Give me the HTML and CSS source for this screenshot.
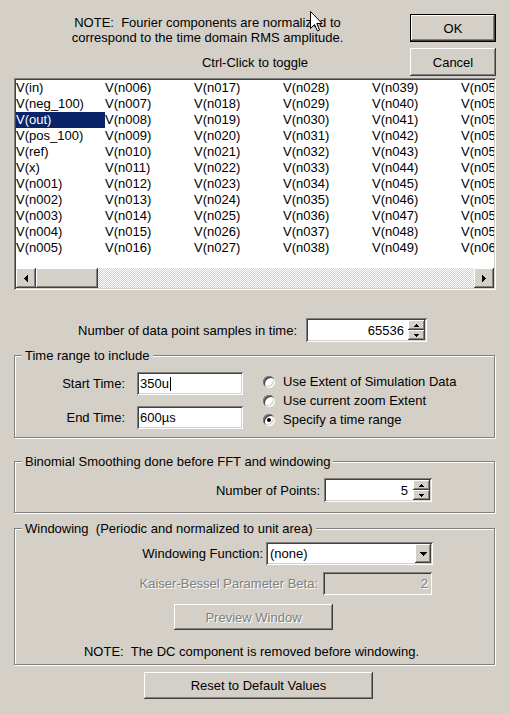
FILE: index.html
```html
<!DOCTYPE html>
<html>
<head>
<meta charset="utf-8">
<link rel="stylesheet" href="styles.css">
</head>
<body>
<div class="dialog">
  <div class="header">
    <div class="note">NOTE:&nbsp; Fourier components are normalized to<br>correspond to the time domain RMS amplitude.</div>
    <div class="btn raised default ok"><span>OK</span></div>
    <div class="hint">Ctrl-Click to toggle</div>
    <div class="btn raised cancel">Cancel</div>
  </div>

  <div class="listbox sunken">
    <div class="list-items">
      <div class="item">V(in)</div><div class="item">V(neg_100)</div><div class="item selected">V(out)</div><div class="item">V(pos_100)</div><div class="item">V(ref)</div><div class="item">V(x)</div><div class="item">V(n001)</div><div class="item">V(n002)</div><div class="item">V(n003)</div><div class="item">V(n004)</div><div class="item">V(n005)</div>
      <div class="item">V(n006)</div><div class="item">V(n007)</div><div class="item">V(n008)</div><div class="item">V(n009)</div><div class="item">V(n010)</div><div class="item">V(n011)</div><div class="item">V(n012)</div><div class="item">V(n013)</div><div class="item">V(n014)</div><div class="item">V(n015)</div><div class="item">V(n016)</div>
      <div class="item">V(n017)</div><div class="item">V(n018)</div><div class="item">V(n019)</div><div class="item">V(n020)</div><div class="item">V(n021)</div><div class="item">V(n022)</div><div class="item">V(n023)</div><div class="item">V(n024)</div><div class="item">V(n025)</div><div class="item">V(n026)</div><div class="item">V(n027)</div>
      <div class="item">V(n028)</div><div class="item">V(n029)</div><div class="item">V(n030)</div><div class="item">V(n031)</div><div class="item">V(n032)</div><div class="item">V(n033)</div><div class="item">V(n034)</div><div class="item">V(n035)</div><div class="item">V(n036)</div><div class="item">V(n037)</div><div class="item">V(n038)</div>
      <div class="item">V(n039)</div><div class="item">V(n040)</div><div class="item">V(n041)</div><div class="item">V(n042)</div><div class="item">V(n043)</div><div class="item">V(n044)</div><div class="item">V(n045)</div><div class="item">V(n046)</div><div class="item">V(n047)</div><div class="item">V(n048)</div><div class="item">V(n049)</div>
      <div class="item">V(n050)</div><div class="item">V(n051)</div><div class="item">V(n052)</div><div class="item">V(n053)</div><div class="item">V(n054)</div><div class="item">V(n055)</div><div class="item">V(n056)</div><div class="item">V(n057)</div><div class="item">V(n058)</div><div class="item">V(n059)</div><div class="item">V(n060)</div>
    </div>
    <div class="hscroll">
      <div class="sb-btn raised"><svg width="4" height="7" viewBox="0 0 4 7"><path d="M0 3h1V2h1V1h1V0h1v7H3V6H2V5H1V4H0z"/></svg></div>
      <div class="sb-thumb raised"></div>
      <div class="sb-track"></div>
      <div class="sb-btn raised"><svg width="4" height="7" viewBox="0 0 4 7"><path d="M0 0h1v1h1v1h1v1h1v1H3v1H2v1H1v1H0z"/></svg></div>
    </div>
  </div>

  <div class="samples-row">
    <span class="lbl">Number of data point samples in time:</span>
    <div class="field sunken samples-field">
      <span class="val">65536</span>
      <div class="spinner">
        <div class="spin-btn raised"><svg width="5" height="3" viewBox="0 0 5 3"><path d="M2 0h1v1h1v1h1v1H0V2h1V1h1z"/></svg></div>
        <div class="spin-btn raised"><svg width="5" height="3" viewBox="0 0 5 3"><path d="M0 0h5v1H4v1H3v1H2V2H1V1H0z"/></svg></div>
      </div>
    </div>
  </div>

  <fieldset class="group time-group">
    <legend>Time range to include</legend>
    <div class="time-body">
      <div class="time-grid">
        <span class="tlbl">Start Time:</span>
        <div class="field sunken tfield">350u<span class="caret"></span></div>
        <span class="tlbl">End Time:</span>
        <div class="field sunken tfield">600µs</div>
      </div>
      <div class="radios">
        <div class="radio-row"><span class="radio"></span><span>Use Extent of Simulation Data</span></div>
        <div class="radio-row"><span class="radio"></span><span>Use current zoom Extent</span></div>
        <div class="radio-row"><span class="radio checked"></span><span>Specify a time range</span></div>
      </div>
    </div>
  </fieldset>

  <fieldset class="group binom-group">
    <legend>Binomial Smoothing done before FFT and windowing</legend>
    <div class="binom-body">
      <span class="lbl">Number of Points:</span>
      <div class="field sunken points-field">
        <span class="val">5</span>
        <div class="spinner">
          <div class="spin-btn raised"><svg width="5" height="3" viewBox="0 0 5 3"><path d="M2 0h1v1h1v1h1v1H0V2h1V1h1z"/></svg></div>
          <div class="spin-btn raised"><svg width="5" height="3" viewBox="0 0 5 3"><path d="M0 0h5v1H4v1H3v1H2V2H1V1H0z"/></svg></div>
        </div>
      </div>
    </div>
  </fieldset>

  <fieldset class="group win-group">
    <legend>Windowing&nbsp; (Periodic and normalized to unit area)</legend>
    <div class="win-body">
      <div class="wrow">
        <span class="lbl">Windowing Function:</span>
        <div class="field sunken select">
          <span class="sel-text">(none)</span>
          <div class="dd-btn raised"><svg width="7" height="4" viewBox="0 0 7 4"><path d="M0 0h7v1H6v1H5v1H4v1H3V3H2V2H1V1H0z"/></svg></div>
        </div>
      </div>
      <div class="wrow kaiser-row">
        <span class="lbl disabled">Kaiser-Bessel Parameter Beta:</span>
        <div class="field sunken kaiser-field"><span class="disabled">2</span></div>
      </div>
      <div class="btn raised preview"><span class="disabled">Preview Window</span></div>
      <div class="dc-note">NOTE:&nbsp; The DC component is removed before windowing.</div>
    </div>
  </fieldset>

  <div class="btn raised reset">Reset to Default Values</div>

  <svg class="cursor" width="13" height="21" viewBox="0 0 13 21"><path d="M0.5 0.5V17.5L4.5 13.5L7.5 20L9.5 19L6.8 12.5H12.2Z" fill="#fff" stroke="#000" stroke-width="1"/></svg>
</div>
</body>
</html>
```

FILE: styles.css
```css
* { box-sizing: border-box; }
html, body { margin: 0; padding: 0; }
body {
  width: 510px;
  height: 714px;
  overflow: hidden;
  background: #d4d0c8;
  font-family: "Liberation Sans", Arial, sans-serif;
  font-size: 13px;
  color: #000;
}
.dialog {
  position: relative;
  padding: 14px 14px 0 14px;
}

/* classic 3D bevels */
.raised {
  background: #d4d0c8;
  box-shadow: inset -1px -1px #404040, inset 1px 1px #fff, inset -2px -2px #808080, inset 2px 2px #d4d0c8;
}
.sunken {
  box-shadow: inset 1px 1px #808080, inset -1px -1px #fff, inset 2px 2px #404040, inset -2px -2px #d4d0c8;
}
.disabled { color: #808080; text-shadow: 1px 1px 0 #fff; }

/* header */
.header {
  display: grid;
  grid-template-columns: 1fr 86px;
  grid-template-rows: 28px 28px;
  row-gap: 6px;
}
.note {
  grid-column: 1;
  grid-row: 1 / span 2;
  align-self: start;
  padding: 1px 9px 0 0;
  text-align: center;
  line-height: 15px;
}
.hint {
  grid-column: 1 / -1;
  grid-row: 2;
  align-self: center;
  text-align: center;
  line-height: 15px;
}
.btn {
  display: flex;
  align-items: center;
  justify-content: center;
}
.ok { grid-column: 2; grid-row: 1; border: 1px solid #000; }
.cancel { grid-column: 2; grid-row: 2; }

/* list box */
.listbox {
  margin-top: 2px;
  width: 482px;
  height: 212px;
  padding: 2px;
  background: #fff;
  display: flex;
  flex-direction: column;
}
.list-items {
  height: 188px;
  overflow: hidden;
  display: grid;
  grid-auto-flow: column;
  grid-template-rows: repeat(11, 16px);
  grid-auto-columns: 89px;
  align-content: start;
}
.item {
  line-height: 16px;
  white-space: nowrap;
}
.item.selected { background: #0a246a; color: #fff; }
.hscroll {
  height: 20px;
  display: flex;
}
.sb-btn {
  width: 20px;
  height: 20px;
  flex: none;
  display: flex;
  align-items: center;
  justify-content: center;
}
.sb-thumb { width: 62px; height: 20px; flex: none; }
.sb-track {
  flex: 1;
  background-color: #fff;
  background-image: repeating-conic-gradient(#d4d0c8 0 25%, #fff 0 50%);
  background-size: 2px 2px;
}

/* fields */
.field {
  background: #fff;
  padding: 2px;
  display: flex;
  align-items: center;
}
.val { flex: 1; text-align: right; padding-right: 4px; }
.spinner {
  width: 17px;
  height: 20px;
  flex: none;
  display: flex;
  flex-direction: column;
}
.spin-btn {
  height: 10px;
  display: flex;
  align-items: center;
  justify-content: center;
}

.samples-row {
  margin-top: 28px;
  padding-right: 69px;
  display: flex;
  justify-content: flex-end;
  align-items: center;
  gap: 9px;
}
.samples-field { width: 121px; height: 24px; }

/* group boxes */
.group {
  margin: 0 1px 0 0;
  padding: 0;
  min-width: 0;
  border: 1px solid #808080;
  box-shadow: inset 1px 1px #fff, 1px 1px #fff;
}
.group legend {
  margin-left: 7px;
  padding: 0 3px;
  line-height: 15px;
  background: #d4d0c8;
}

.time-group { margin-top: 6px; }
.time-body {
  padding: 9px 0 8px 15px;
  display: flex;
  align-items: center;
}
.time-grid {
  display: grid;
  grid-template-columns: 95px 106px;
  column-gap: 12px;
  row-gap: 11px;
  align-items: center;
}
.tlbl { text-align: right; }
.tfield { height: 23px; padding-left: 3px; }
.caret { width: 1px; height: 14px; background: #000; margin-left: 1px; }
.radios {
  margin-left: 20px;
  display: flex;
  flex-direction: column;
}
.radio-row {
  height: 19px;
  display: flex;
  align-items: center;
  gap: 8px;
}
.radio {
  width: 12px;
  height: 12px;
  flex: none;
  border-radius: 50%;
  background: #fff;
  box-shadow: inset 1px 1px #808080, inset -1px -1px #fff, inset 2px 2px #404040, inset -2px -2px #d4d0c8;
  display: flex;
  align-items: center;
  justify-content: center;
}
.radio.checked::after {
  content: "";
  width: 4px;
  height: 4px;
  border-radius: 50%;
  background: #000;
}

.binom-group { margin-top: 16px; }
.binom-body {
  padding: 9px 62px 10px 0;
  display: flex;
  justify-content: flex-end;
  align-items: center;
  gap: 4px;
}
.points-field { width: 108px; height: 24px; }
.points-field .val { padding-right: 5px; }

.win-group { margin-top: 8px; }
.win-body {
  padding: 6px 0 5px 0;
  display: flex;
  flex-direction: column;
}
.wrow {
  display: flex;
  justify-content: flex-end;
  align-items: center;
  gap: 3px;
  padding-right: 61px;
}
.select { width: 167px; height: 23px; }
.sel-text { flex: 1; padding-left: 2px; }
.dd-btn {
  width: 16px;
  height: 19px;
  flex: none;
  display: flex;
  align-items: center;
  justify-content: center;
}
.kaiser-row { margin-top: 7px; gap: 5px; }
.kaiser-field {
  width: 109px;
  height: 23px;
  margin-right: 1px;
  background: #d4d0c8;
  justify-content: flex-end;
  padding-right: 4px;
}
.preview {
  width: 159px;
  height: 26px;
  margin: 9px auto 0;
  position: relative;
  left: -1px;
}
.dc-note {
  margin-top: 14px;
  padding-right: 6px;
  line-height: 15px;
  text-align: center;
}

.reset {
  width: 229px;
  height: 27px;
  margin: 7px 0 0 130px;
}

.cursor {
  position: absolute;
  left: 310px;
  top: 11px;
}
```
